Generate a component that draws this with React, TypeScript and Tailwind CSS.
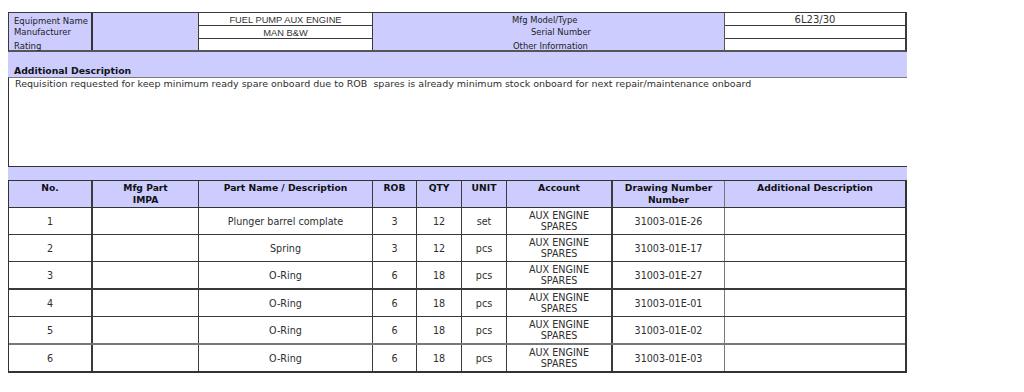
import React from 'react';

interface PartRow {
  no: number;
  impa: string;
  name: string;
  rob: number;
  qty: number;
  unit: string;
  account: string[];
  drawing: string;
  remark: string;
  height: string;
}

const rows: PartRow[] = [
  { no: 1, impa: '', name: 'Plunger barrel complate', rob: 3, qty: 12, unit: 'set', account: ['AUX ENGINE', 'SPARES'], drawing: '31003-01E-26', remark: '', height: 'h-[27px] border-b' },
  { no: 2, impa: '', name: 'Spring', rob: 3, qty: 12, unit: 'pcs', account: ['AUX ENGINE', 'SPARES'], drawing: '31003-01E-17', remark: '', height: 'h-[27px] border-b' },
  { no: 3, impa: '', name: 'O-Ring', rob: 6, qty: 18, unit: 'pcs', account: ['AUX ENGINE', 'SPARES'], drawing: '31003-01E-27', remark: '', height: 'h-[28px] border-b-2' },
  { no: 4, impa: '', name: 'O-Ring', rob: 6, qty: 18, unit: 'pcs', account: ['AUX ENGINE', 'SPARES'], drawing: '31003-01E-01', remark: '', height: 'h-[27px] border-b' },
  { no: 5, impa: '', name: 'O-Ring', rob: 6, qty: 18, unit: 'pcs', account: ['AUX ENGINE', 'SPARES'], drawing: '31003-01E-02', remark: '', height: 'h-[28px] border-b-2 border-b-[#777]' },
  { no: 6, impa: '', name: 'O-Ring', rob: 6, qty: 18, unit: 'pcs', account: ['AUX ENGINE', 'SPARES'], drawing: '31003-01E-03', remark: '', height: 'h-[26px]' },
];

const gridCols = 'grid grid-cols-[84px_106px_174px_44px_45px_45px_106px_112px_180px]';

const headers: { label: string[]; border: string }[] = [
  { label: ['No.'], border: 'border-r-2' },
  { label: ['Mfg Part', 'IMPA'], border: 'border-r' },
  { label: ['Part Name / Description'], border: 'border-r' },
  { label: ['ROB'], border: 'border-r' },
  { label: ['QTY'], border: 'border-r' },
  { label: ['UNIT'], border: 'border-r' },
  { label: ['Account'], border: 'border-r-2' },
  { label: ['Drawing Number', 'Number'], border: 'border-r border-r-[#777]' },
  { label: ['Additional Description'], border: '' },
];

const Cell: React.FC<{ className?: string; children?: React.ReactNode }> = ({ className = '', children }) => (
  <div className={`flex flex-col items-center justify-center text-center border-[#3a3a3a] ${className}`}>
    {children}
  </div>
);

export default function App() {
  return (
    <div className="min-h-[392px] bg-white pt-3 pl-2 font-['DejaVu_Sans',Verdana,sans-serif] text-[#2e2e2e]">
      <div className="w-[899px]">
        {/* equipment info */}
        <div className="flex h-[40px] border-t border-l border-r-2 border-b-2 border-[#3a3a3a] border-b-[#555]">
          <div className="w-[84px] bg-[#ccccff] border-r-2 border-[#333] pl-[5px] pt-[2px] text-[8.5px] text-[#222]">
            <div className="leading-[12px]">Equipment Name</div>
            <div className="leading-[11px]">Manufacturer</div>
            <div className="pt-[2px] leading-[12px]">Rating</div>
          </div>
          <div className="w-[106px] bg-[#ccccff] border-r border-[#3a3a3a]" />
          <div className="flex w-[174px] flex-col border-r border-[#3a3a3a] font-['Liberation_Sans',Arial,sans-serif] text-[9.3px] text-[#333]">
            <div className="h-[13px] border-b border-[#3a3a3a] pt-[1px] text-center leading-[12px]">FUEL PUMP AUX ENGINE</div>
            <div className="h-[13px] border-b border-[#3a3a3a] pt-[1px] text-center leading-[12px]">MAN B&amp;W</div>
            <div className="flex-1" />
          </div>
          <div className="w-[352px] bg-[#ccccff] border-r border-[#555] text-[8.4px] text-[#222]">
            <div className="pl-[139px] pt-[1px] leading-[12px]">Mfg Model/Type</div>
            <div className="pl-[158px] leading-[13px]">Serial Number</div>
            <div className="pl-[140px] pt-[1px] leading-[13px]">Other Information</div>
          </div>
          <div className="flex flex-1 flex-col text-[10px] text-[#333]">
            <div className="h-[13px] border-b border-[#3a3a3a] pt-[1px] text-center leading-[12px]">6L23/30</div>
            <div className="h-[13px] border-b border-[#3a3a3a]" />
            <div className="flex-1" />
          </div>
        </div>

        {/* additional description */}
        <div className="flex h-[25px] items-end bg-[#ccccff] pl-[6px]">
          <span className="text-[9.3px] font-bold leading-[12px] text-[#111]">Additional Description</span>
        </div>
        <div className="h-[90px] border-t border-t-[#7a7a7a] border-l border-b border-[#333] pl-[6px] text-[9.5px] leading-[12px] text-[#2e2e2e]">
          Requisition requested for keep minimum ready spare onboard due to ROB&nbsp; spares is already minimum stock onboard for next repair/maintenance onboard
        </div>
        <div className="h-[13px] bg-[#ccccff]" />

        {/* parts list */}
        <div className="border-t border-l border-r-2 border-b-2 border-[#333]">
          <div className={`${gridCols} h-[27px] border-b border-[#333] bg-[#ccccff]`}>
            {headers.map((h, i) => (
              <div
                key={i}
                className={`border-[#3a3a3a] pt-[1px] text-center text-[9.2px] font-bold leading-[12px] text-[#111] ${h.border}`}
              >
                {h.label.map((l) => (
                  <div key={l}>{l}</div>
                ))}
              </div>
            ))}
          </div>
          {rows.map((r) => (
            <div key={r.no} className={`${gridCols} border-[#3a3a3a] text-[9.6px] leading-[11px] ${r.height}`}>
              <Cell className="border-r-2">{r.no}</Cell>
              <Cell className="border-r">{r.impa}</Cell>
              <Cell className="border-r">{r.name}</Cell>
              <Cell className="border-r">{r.rob}</Cell>
              <Cell className="border-r">{r.qty}</Cell>
              <Cell className="border-r">{r.unit}</Cell>
              <Cell className="border-r-2">
                {r.account.map((a) => (
                  <div key={a}>{a}</div>
                ))}
              </Cell>
              <Cell className="border-r border-r-[#777]">{r.drawing}</Cell>
              <Cell>{r.remark}</Cell>
            </div>
          ))}
        </div>
      </div>
    </div>
  );
}
